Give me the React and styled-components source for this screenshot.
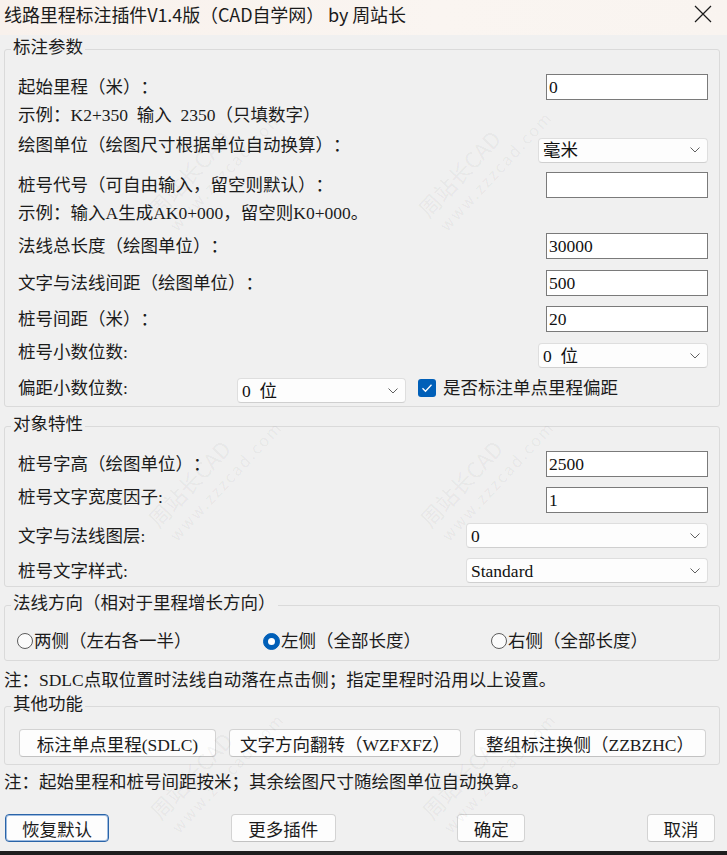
import React from 'react';
import styled, { createGlobalStyle } from 'styled-components';

const GlobalStyle = createGlobalStyle`
  html, body { margin: 0; padding: 0; background: #1e1e1e; }
  * { box-sizing: border-box; text-spacing-trim: space-all; text-autospace: no-autospace; }
`;

const UI_FONT = `"Liberation Serif", "Noto Sans CJK SC", serif`;

const Window = styled.div`
  position: relative;
  width: 727px;
  height: 851px;
  background: #f0f0f0;
  overflow: hidden;
  font-family: ${UI_FONT};
  font-size: 17.5px;
  word-spacing: 4.4px;
  color: #1b1b1b;
`;

const TitleBar = styled.div`
  height: 35px;
  display: flex;
  align-items: flex-start;
  justify-content: space-between;
  padding: 0 15px 0 4px;
  background: linear-gradient(90deg, #f8f1ec 0%, #faf5f1 60%, #f9f4f0 100%);
`;

const Title = styled.div`
  font-family: "Noto Sans CJK SC", sans-serif;
  font-size: 18px;
  line-height: 28px;
  word-spacing: 0;
  color: #1a1a1a;
  letter-spacing: -0.1px;
`;

const CloseIcon = styled.svg`
  margin-top: 5px;
  width: 18px;
  height: 18px;
`;

const Content = styled.div`
  padding: 0 7px 0 4px;
`;

const Group = styled.div`
  position: relative;
  margin-top: ${p => p.$mt}px;
  border: 1px solid #dadada;
  border-radius: 3px;
  padding: ${p => p.$pad};
`;

const GroupTitle = styled.div`
  position: absolute;
  top: -13px;
  left: 6px;
  padding: 0 2px;
  line-height: 20px;
  background: #f0f0f0;
  white-space: nowrap;
`;

const Row = styled.div`
  display: flex;
  align-items: center;
  height: ${p => p.$h || 26}px;
  margin-top: ${p => p.$mt || 0}px;
`;

const Label = styled.span`
  line-height: 20px;
  white-space: nowrap;
  margin-bottom: ${p => (p.$raise || 0) * 2}px;
  ${p => (p.$w ? `width: ${p.$w}px; flex: none;` : '')}
`;

const TextBox = styled.input`
  margin-left: auto;
  width: 162px;
  height: 26px;
  border: 1px solid #7a7a7a;
  background: #ffffff;
  padding: 0 2px;
  font-family: ${UI_FONT};
  font-size: 17.5px;
  color: #111;
  outline: none;
`;

const ComboBox = styled.div`
  ${p => (p.$auto ? 'margin-left: auto;' : '')}
  flex: none;
  width: ${p => p.$w}px;
  height: 25px;
  display: flex;
  align-items: center;
  justify-content: space-between;
  padding: 0 7px 0 4px;
  background: #fdfdfd;
  border: 1px solid #dedede;
  border-bottom-color: #cfcfcf;
  border-radius: 4px;
  color: #111;
`;

const ComboValue = styled.span`
  line-height: 20px;
  white-space: nowrap;
`;

const Chevron = styled.svg`
  width: 10px;
  height: 6px;
  flex: none;
`;

const CheckBox = styled.span`
  flex: none;
  width: 18px;
  height: 18px;
  margin-left: 12px;
  margin-bottom: 6px;
  border-radius: 3px;
  background: #005fb8;
  display: flex;
  align-items: center;
  justify-content: center;
`;

const CheckText = styled.span`
  margin-left: 7px;
  margin-bottom: 6px;
  line-height: 20px;
  white-space: nowrap;
`;

const RadioItem = styled.div`
  display: flex;
  align-items: center;
  ${p => (p.$w ? `width: ${p.$w}px; flex: none;` : '')}
`;

const RadioDot = styled.span`
  flex: none;
  width: ${p => (p.$on ? 17 : 16)}px;
  height: ${p => (p.$on ? 17 : 16)}px;
  border-radius: 50%;
  display: flex;
  align-items: center;
  justify-content: center;
  background: ${p => (p.$on ? '#005fb8' : '#fbfbfb')};
  border: 1px solid ${p => (p.$on ? '#005fb8' : '#5c5c5c')};
  &::after {
    content: '';
    display: ${p => (p.$on ? 'block' : 'none')};
    width: 7px;
    height: 7px;
    border-radius: 50%;
    background: #ffffff;
  }
`;

const RadioText = styled.span`
  margin-left: 1px;
  line-height: 20px;
  white-space: nowrap;
`;

const Note = styled.div`
  margin-top: ${p => p.$mt}px;
  line-height: 20px;
  white-space: nowrap;
`;

const ButtonRow = styled.div`
  display: flex;
  gap: 13px;
`;

const Button = styled.button`
  flex: none;
  width: ${p => p.$w}px;
  height: 28px;
  padding: 0;
  background: #fdfdfd;
  border: 1px solid #d3d3d3;
  border-bottom-color: #c2c2c2;
  border-radius: 4px;
  font-family: ${UI_FONT};
  font-size: 17.5px;
  color: #1b1b1b;
  white-space: nowrap;
  ${p => (p.$focus ? 'border: 1px solid #2a64a8; box-shadow: inset 0 0 0 1px #9dbbe0;' : '')}
`;

const Footer = styled.div`
  margin-top: 22px;
  display: flex;
  justify-content: space-between;
  padding: 0 5px 0 1px;
`;

const Overlay = styled.div`
  position: absolute;
  inset: 0;
  pointer-events: none;
`;

const Mark = styled.div`
  position: absolute;
  left: ${p => p.$x}px;
  top: ${p => p.$y}px;
  transform: translate(-50%, -50%) rotate(-47deg);
  display: flex;
  flex-direction: column;
  align-items: center;
  font-family: "Noto Sans CJK SC", sans-serif;
  word-spacing: 0;
  color: rgba(0, 0, 0, 0.05);
  white-space: nowrap;
`;

const MarkBig = styled.span`
  font-size: 22px;
  line-height: 28px;
  margin-right: 34px;
`;

const MarkSmall = styled.span`
  font-size: 16px;
  line-height: 22px;
  letter-spacing: 2px;
  margin-left: 20px;
`;

const Combo = ({ value, w, auto }) => (
  <ComboBox $w={w} $auto={auto}>
    <ComboValue>{value}</ComboValue>
    <Chevron viewBox="0 0 10 6">
      <path d="M0.5 0.5 L5 5 L9.5 0.5" fill="none" stroke="#606060" strokeWidth="1" />
    </Chevron>
  </ComboBox>
);

const marks = [
  { x: 208, y: 168 },
  { x: 478, y: 168 },
  { x: 208, y: 478 },
  { x: 480, y: 478 },
  { x: 210, y: 770 },
  { x: 482, y: 770 },
];

export default function App() {
  return (
    <>
      <GlobalStyle />
      <Window>
        <TitleBar>
          <Title>线路里程标注插件V1.4版（CAD自学网） by 周站长</Title>
          <CloseIcon viewBox="0 0 18 18">
            <path d="M1 1 L17 17 M17 1 L1 17" stroke="#1b1b1b" strokeWidth="1.2" fill="none" />
          </CloseIcon>
        </TitleBar>
        <Content>
          <Group $mt={14} $pad="24px 11px 3px 13px">
            <GroupTitle>标注参数</GroupTitle>
            <Row>
              <Label>起始里程（米）：</Label>
              <TextBox defaultValue="0" />
            </Row>
            <Row $h={20} $mt={5}>
              <Label>示例：K2+350 输入 2350（只填数字）</Label>
            </Row>
            <Row $mt={12}>
              <Label $raise={5}>绘图单位（绘图尺寸根据单位自动换算）：</Label>
              <Combo value="毫米" w={170} auto />
            </Row>
            <Row $mt={9}>
              <Label>桩号代号（可自由输入，留空则默认）：</Label>
              <TextBox defaultValue="" />
            </Row>
            <Row $h={20} $mt={5}>
              <Label>示例：输入A生成AK0+000，留空则K0+000。</Label>
            </Row>
            <Row $mt={10}>
              <Label>法线总长度（绘图单位）：</Label>
              <TextBox defaultValue="30000" />
            </Row>
            <Row $mt={11}>
              <Label>文字与法线间距（绘图单位）：</Label>
              <TextBox defaultValue="500" />
            </Row>
            <Row $mt={10}>
              <Label>桩号间距（米）：</Label>
              <TextBox defaultValue="20" />
            </Row>
            <Row $h={25} $mt={11}>
              <Label $raise={4}>桩号小数位数:</Label>
              <Combo value="0 位" w={170} auto />
            </Row>
            <Row $h={25} $mt={10}>
              <Label $w={219} $raise={3}>偏距小数位数:</Label>
              <Combo value="0 位" w={169} />
              <CheckBox>
                <svg width="12" height="10" viewBox="0 0 12 10">
                  <path d="M1.5 5.2 L4.5 8.2 L10.5 1.8" fill="none" stroke="#ffffff" strokeWidth="1.3" />
                </svg>
              </CheckBox>
              <CheckText>是否标注单点里程偏距</CheckText>
            </Row>
          </Group>

          <Group $mt={19} $pad="24px 11px 3px 13px">
            <GroupTitle>对象特性</GroupTitle>
            <Row>
              <Label>桩号字高（绘图单位）：</Label>
              <TextBox defaultValue="2500" />
            </Row>
            <Row $mt={10}>
              <Label $raise={3}>桩号文字宽度因子:</Label>
              <TextBox defaultValue="1" />
            </Row>
            <Row $h={25} $mt={10}>
              <Label>文字与法线图层:</Label>
              <Combo value="0" w={242} auto />
            </Row>
            <Row $h={25} $mt={10}>
              <Label>桩号文字样式:</Label>
              <Combo value="Standard" w={242} auto />
            </Row>
          </Group>

          <Group $mt={18} $pad="25px 11px 9px 12px">
            <GroupTitle>法线方向（相对于里程增长方向）</GroupTitle>
            <Row $h={20}>
              <RadioItem $w={246}>
                <RadioDot />
                <RadioText>两侧（左右各一半）</RadioText>
              </RadioItem>
              <RadioItem $w={228}>
                <RadioDot $on />
                <RadioText>左侧（全部长度）</RadioText>
              </RadioItem>
              <RadioItem>
                <RadioDot />
                <RadioText>右侧（全部长度）</RadioText>
              </RadioItem>
            </Row>
          </Group>

          <Note $mt={9}>注：SDLC点取位置时法线自动落在点击侧；指定里程时沿用以上设置。</Note>

          <Group $mt={16} $pad="22px 11px 7px 14px">
            <GroupTitle>其他功能</GroupTitle>
            <ButtonRow>
              <Button $w={197}>标注单点里程(SDLC)</Button>
              <Button $w={232}>文字方向翻转（WZFXFZ）</Button>
              <Button $w={232}>整组标注换侧（ZZBZHC）</Button>
            </ButtonRow>
          </Group>

          <Note $mt={7}>注：起始里程和桩号间距按米；其余绘图尺寸随绘图单位自动换算。</Note>

          <Footer>
            <Button $w={104} $focus>恢复默认</Button>
            <Button $w={105}>更多插件</Button>
            <Button $w={68}>确定</Button>
            <Button $w={68}>取消</Button>
          </Footer>
        </Content>
        <Overlay>
          {marks.map((m, i) => (
            <Mark key={i} $x={m.x} $y={m.y}>
              <MarkBig>周站长CAD</MarkBig>
              <MarkSmall>www.zzzcad.com</MarkSmall>
            </Mark>
          ))}
        </Overlay>
      </Window>
    </>
  );
}
